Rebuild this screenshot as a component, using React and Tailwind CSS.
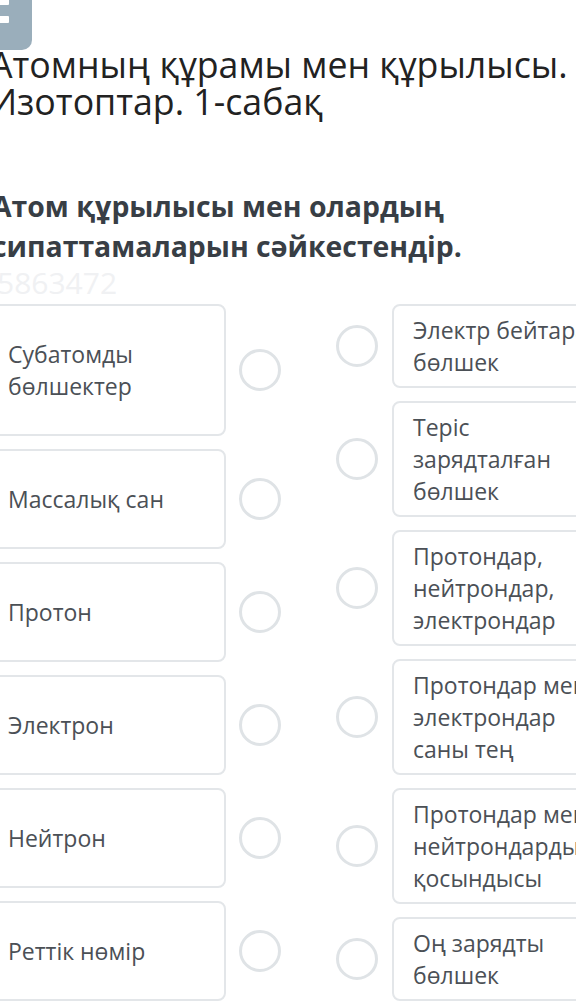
import React from 'react';

const leftItems = [
    'Субатомды бөлшектер',
    'Массалық сан',
    'Протон',
    'Электрон',
    'Нейтрон',
    'Реттік нөмір',
];

const rightItems = [
    'Электр бейтарап бөлшек',
    'Теріс зарядталған бөлшек',
    'Протондар, нейтрондар, электрондар',
    'Протондар мен электрондар саны тең',
    'Протондар мен нейтрондардың қосындысы',
    'Оң зарядты бөлшек',
];

const Circle = () => (
    <div className="w-[42px] h-[42px] shrink-0 rounded-full border-[3px] border-[#dfe3e6]" />
);

const App = () => {
    return (
        <div
            className="w-[576px] h-[1006px] overflow-hidden bg-white"
            style={{ fontFamily: '"Open Sans", "Noto Sans", sans-serif' }}
        >
            <div className="ml-[-13px] w-[700px]">
                {/* Menu button */}
                <div className="w-[72px] h-[80px] mt-[-30px] ml-[-27px] bg-[#9aaebb] rounded-[10px] pt-[28px] pl-[28px] flex flex-col gap-[11px]">
                    <div className="w-[21px] h-[7px] bg-white rounded-[1px]" />
                    <div className="w-[21px] h-[7px] bg-white rounded-[1px]" />
                </div>

                {/* Title */}
                <h1 className="mt-[-4px] pl-[3px] text-[35.7px] leading-[37px] text-[#222222] font-normal whitespace-nowrap">
                    Атомның құрамы мен құрылысы.
                    <br />
                    Изотоптар. 1-сабақ
                </h1>

                {/* Question */}
                <h2 className="mt-[66px] pl-[5px] text-[28.4px] leading-[40px] font-bold text-[#383e45] whitespace-nowrap">
                    Атом құрылысы мен олардың
                    <br />
                    сипаттамаларын сәйкестендір.
                </h2>

                <div className="mt-[-1px] pl-[10px] text-[30px] leading-[36px] text-[#f0f1f3]">
                    5863472
                </div>

                {/* Matching columns */}
                <div className="mt-[3px] flex items-start gap-[55px] text-[23px] leading-[32px] text-[#4b5056]">
                    <div className="flex flex-col gap-[13px]">
                        {leftItems.map((item) => (
                            <div key={item} className="flex items-center gap-[13px]">
                                <div className="w-[239px] border-2 border-[#e3e6e9] rounded-[8px] px-[19px] py-[32px]">
                                    {item}
                                </div>
                                <Circle />
                            </div>
                        ))}
                    </div>

                    <div className="flex flex-col gap-[13px]">
                        {rightItems.map((item) => (
                            <div key={item} className="flex items-center gap-[14px]">
                                <Circle />
                                <div className="w-[236px] border-2 border-[#e3e6e9] rounded-[8px] px-[19px] py-[8px]">
                                    {item}
                                </div>
                            </div>
                        ))}
                    </div>
                </div>
            </div>
        </div>
    );
};

export default App;
